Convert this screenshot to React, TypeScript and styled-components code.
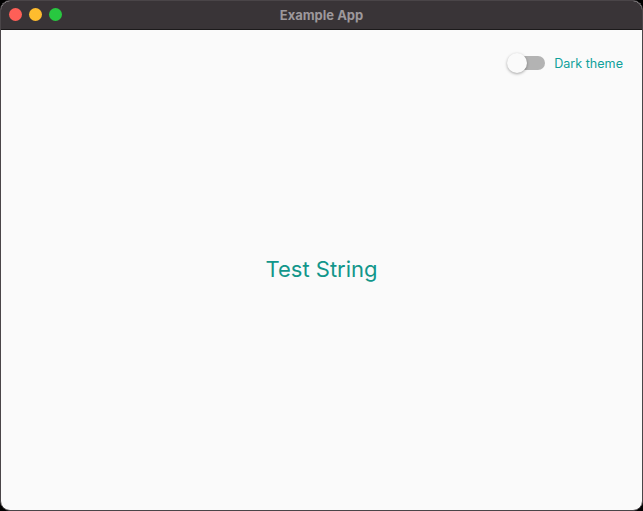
import styled, { createGlobalStyle } from 'styled-components';

const GlobalStyle = createGlobalStyle`
  html, body {
    margin: 0;
    padding: 0;
    background: #000000;
  }
  body {
    font-family: Inter, "Liberation Sans", sans-serif;
  }
`;

const Window = styled.div`
  width: 643px;
  height: 511px;
  box-sizing: border-box;
  display: flex;
  flex-direction: column;
  border: 1px solid #4a4548;
  border-radius: 10px;
  overflow: hidden;
  background: #fafafa;
`;

const TitleBar = styled.div`
  position: relative;
  height: 28px;
  flex-shrink: 0;
  display: flex;
  align-items: center;
  justify-content: center;
  background: #393437;
  border-bottom: 1px solid #1c1a1b;
`;

const Lights = styled.div`
  position: absolute;
  left: 8px;
  top: 7px;
  display: flex;
  gap: 7px;
`;

const Light = styled.span<{ $color: string }>`
  width: 13px;
  height: 13px;
  border-radius: 50%;
  background: ${(p) => p.$color};
`;

const Title = styled.div`
  font-family: Inter, "Liberation Sans", sans-serif;
  font-size: 13px;
  font-weight: 700;
  color: #9d989b;
`;

const Content = styled.div`
  flex: 1;
  display: flex;
  flex-direction: column;
`;

const TopRow = styled.div`
  display: flex;
  justify-content: flex-end;
  align-items: center;
  gap: 9px;
  padding: 21px 19px 0 0;
`;

const Toggle = styled.div`
  position: relative;
  width: 37px;
  height: 24px;
  display: flex;
  align-items: center;
`;

const Track = styled.div`
  width: 35px;
  height: 14px;
  margin-left: 2px;
  border-radius: 7px;
  background: #b3b3b3;
`;

const Thumb = styled.div`
  position: absolute;
  left: -1px;
  top: 2px;
  width: 20px;
  height: 20px;
  border-radius: 50%;
  background: #fafafa;
  box-shadow: 0 1px 3px rgba(0, 0, 0, 0.35);
`;

const Label = styled.span`
  font-size: 12.6px;
  color: #10a19a;
`;

const Center = styled.div`
  flex: 1;
  display: flex;
  align-items: center;
  justify-content: center;
  padding-bottom: 48px;
`;

const Heading = styled.div`
  font-size: 22px;
  color: #12968a;
`;

export default function App() {
  return (
    <>
      <GlobalStyle />
      <Window>
        <TitleBar>
          <Lights>
            <Light $color="#fe5f57" />
            <Light $color="#febc2e" />
            <Light $color="#28c840" />
          </Lights>
          <Title>Example App</Title>
        </TitleBar>
        <Content>
          <TopRow>
            <Toggle>
              <Track />
              <Thumb />
            </Toggle>
            <Label>Dark theme</Label>
          </TopRow>
          <Center>
            <Heading>Test String</Heading>
          </Center>
        </Content>
      </Window>
    </>
  );
}
